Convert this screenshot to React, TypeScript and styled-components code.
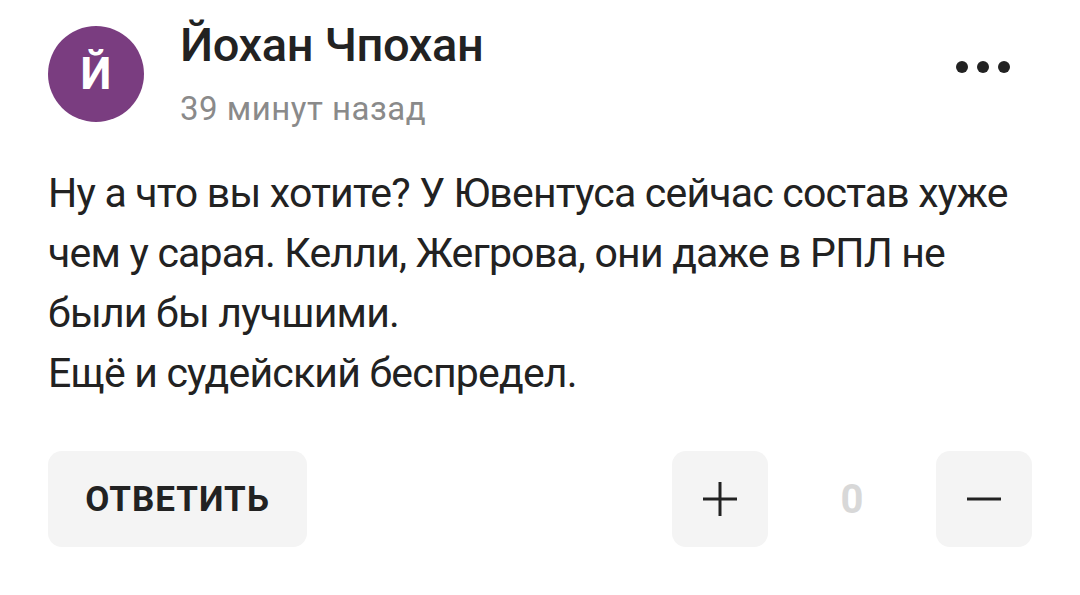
import * as React from 'react';
import styled, { createGlobalStyle } from 'styled-components';

const GlobalStyle = createGlobalStyle`
  html, body {
    margin: 0;
    padding: 0;
    background: #ffffff;
  }
  body {
    font-family: Roboto, "Liberation Sans", sans-serif;
    color: #222222;
  }
`;

const Card = styled.div`
  width: 1080px;
  height: 595px;
  box-sizing: border-box;
  padding: 26px 48px 0 48px;
  display: flex;
  flex-direction: column;
`;

const Header = styled.div`
  display: flex;
  align-items: flex-start;
`;

const Avatar = styled.div<{ $color: string }>`
  width: 96px;
  height: 96px;
  border-radius: 50%;
  background: ${p => p.$color};
  color: #ffffff;
  display: flex;
  align-items: center;
  justify-content: center;
  font-size: 44px;
  font-weight: 700;
  flex-shrink: 0;
`;

const Meta = styled.div`
  display: flex;
  flex-direction: column;
  margin-left: 36px;
  flex: 1;
`;

const Name = styled.div`
  font-size: 47px;
  font-weight: 500;
  line-height: 38px;
  letter-spacing: -0.4px;
  color: #222222;
`;

const Time = styled.div`
  font-size: 33px;
  line-height: 34px;
  color: #8a8a8a;
  margin-top: 28px;
  letter-spacing: 0.5px;
`;

const MoreButton = styled.button`
  display: flex;
  gap: 9px;
  align-items: center;
  background: none;
  border: none;
  padding: 0;
  margin: 35px 22px 0 0;
  cursor: pointer;
`;

const Dot = styled.span`
  width: 12px;
  height: 12px;
  border-radius: 50%;
  background: #222222;
`;

const Body = styled.div`
  margin-top: 37px;
  font-size: 41px;
  line-height: 60px;
  letter-spacing: -0.8px;
  color: #222222;
`;

const Actions = styled.div`
  display: flex;
  align-items: center;
  margin-top: 48px;
`;

const ReplyButton = styled.button`
  width: 259px;
  height: 96px;
  border: none;
  border-radius: 14px;
  background: #f4f4f4;
  font-family: Roboto, "Liberation Sans", sans-serif;
  font-size: 35px;
  font-weight: 700;
  color: #222222;
  letter-spacing: 1px;
  padding: 0;
  cursor: pointer;
`;

const Spacer = styled.div`
  flex: 1;
`;

const VoteButton = styled.button`
  width: 96px;
  height: 96px;
  border: none;
  border-radius: 14px;
  background: #f4f4f4;
  display: flex;
  align-items: center;
  justify-content: center;
  padding: 0;
  cursor: pointer;
`;

const Score = styled.div`
  width: 168px;
  text-align: center;
  font-size: 40px;
  font-weight: 700;
  color: #d8d8d8;
`;

const PlusIcon = () => (
  <svg width="34" height="34" viewBox="0 0 34 34">
    <rect x="0" y="15.5" width="34" height="3" fill="#222" />
    <rect x="15.5" y="0" width="3" height="34" fill="#222" />
  </svg>
);

const MinusIcon = () => (
  <svg width="34" height="34" viewBox="0 0 34 34">
    <rect x="0" y="15.5" width="34" height="3" fill="#222" />
  </svg>
);

export default function App() {
  return (
    <>
      <GlobalStyle />
      <Card>
        <Header>
          <Avatar $color="#7a3d80">Й</Avatar>
          <Meta>
            <Name>Йохан Чпохан</Name>
            <Time>39 минут назад</Time>
          </Meta>
          <MoreButton aria-label="Ещё">
            <Dot />
            <Dot />
            <Dot />
          </MoreButton>
        </Header>
        <Body>
          Ну а что вы хотите? У Ювентуса сейчас состав хуже
          <br />
          чем у сарая. Келли, Жегрова, они даже в РПЛ не
          <br />
          были бы лучшими.
          <br />
          Ещё и судейский беспредел.
        </Body>
        <Actions>
          <ReplyButton>ОТВЕТИТЬ</ReplyButton>
          <Spacer />
          <VoteButton aria-label="Плюс">
            <PlusIcon />
          </VoteButton>
          <Score>0</Score>
          <VoteButton aria-label="Минус">
            <MinusIcon />
          </VoteButton>
        </Actions>
      </Card>
    </>
  );
}
